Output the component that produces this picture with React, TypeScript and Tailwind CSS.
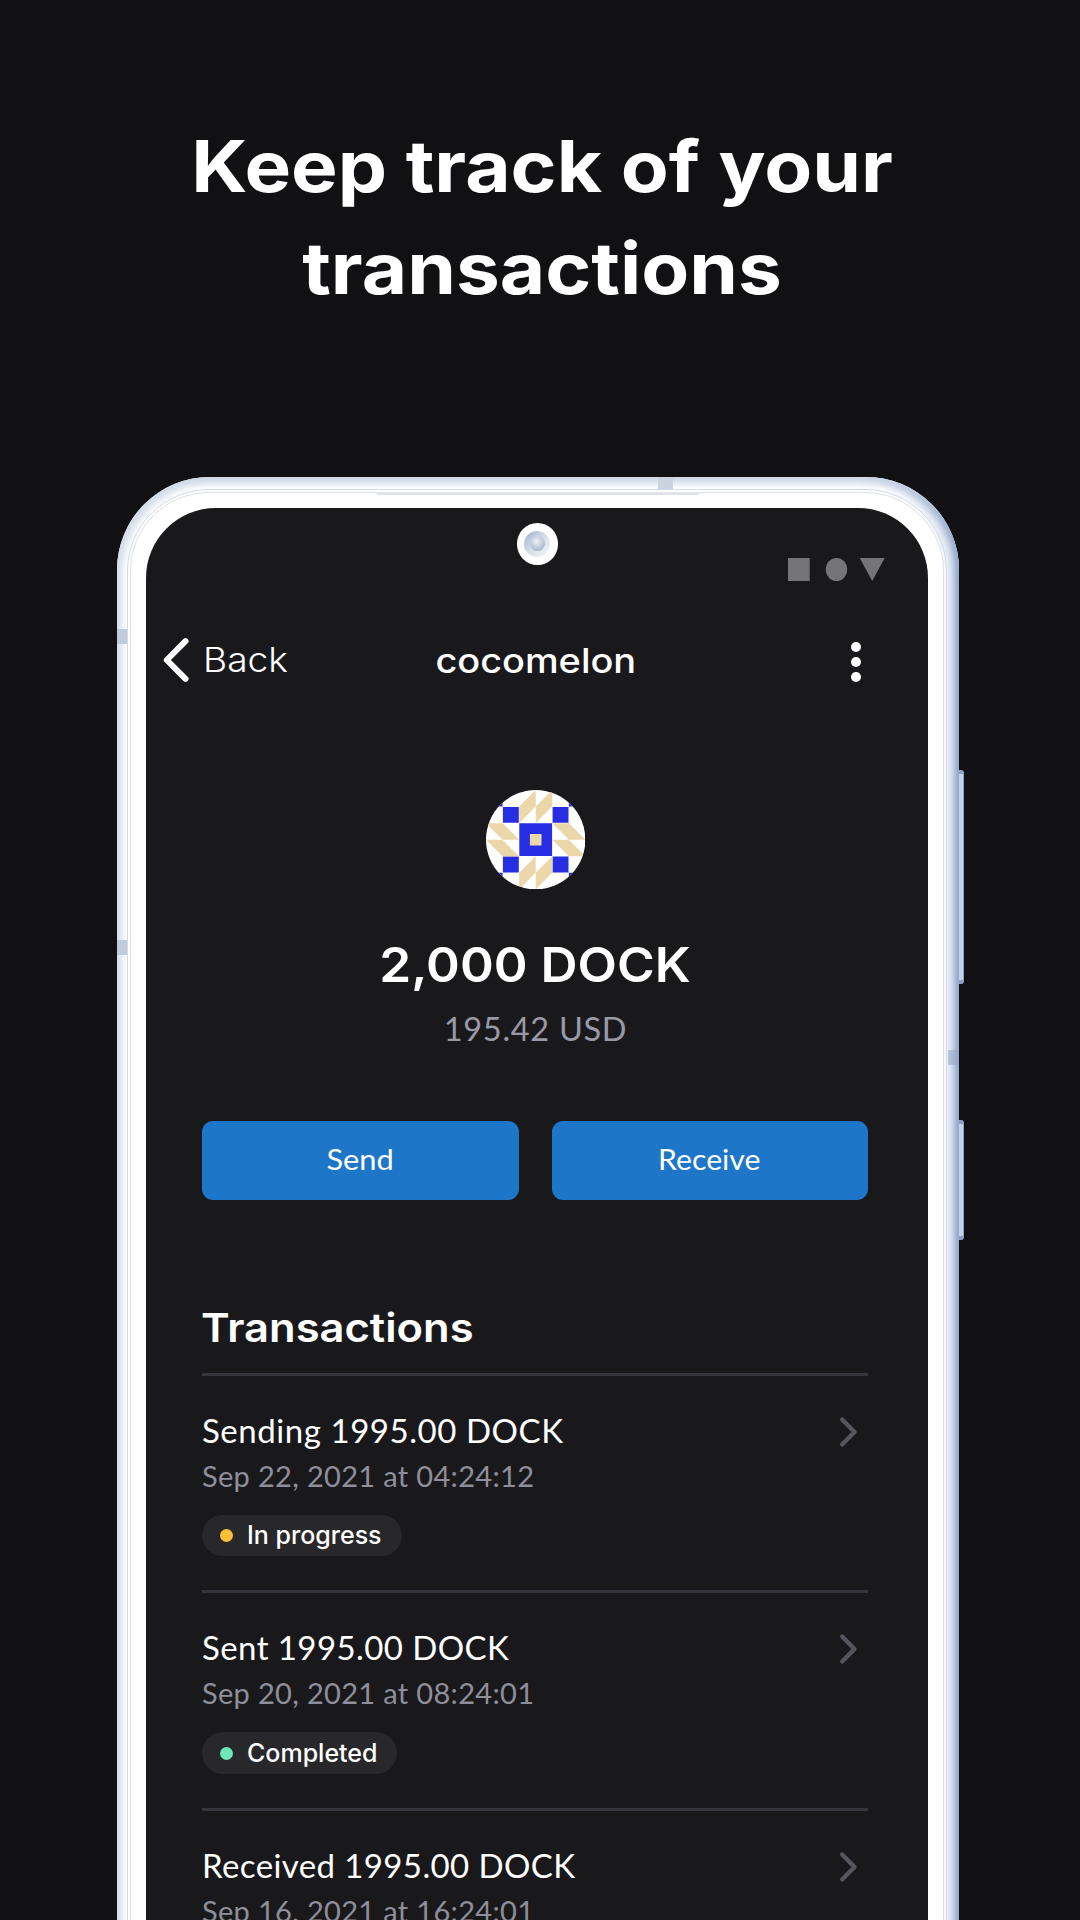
type Transaction = {
  title: string;
  date: string;
  titleClass: string;
  status?: string;
  dotClass?: string;
};

const transactions: Transaction[] = [
  {
    title: "Sending 1995.00 DOCK",
    date: "Sep 22, 2021 at 04:24:12",
    titleClass: "tracking-[0.55px]",
    status: "In progress",
    dotClass: "bg-[#fdbf35]",
  },
  {
    title: "Sent 1995.00 DOCK",
    date: "Sep 20, 2021 at 08:24:01",
    titleClass: "tracking-[0.42px]",
    status: "Completed",
    dotClass: "bg-[#6fe8b8]",
  },
  {
    title: "Received 1995.00 DOCK",
    date: "Sep 16, 2021 at 16:24:01",
    titleClass: "tracking-[0.39px]",
    status: "Completed",
    dotClass: "bg-[#6fe8b8]",
  },
];

function Avatar() {
  return (
    <svg viewBox="0 0 6 6" className="h-[99.4px] w-[99.4px]">
      <defs>
        <clipPath id="avatar-circle">
          <circle cx="3" cy="3" r="3" />
        </clipPath>
      </defs>
      <g clipPath="url(#avatar-circle)">
        <rect width="6" height="6" fill="#fff" />
        <g fill="#272de2">
          <path d="M0 0h1v1H0zM5 0h1v1H5zM0 5h1v1H0zM5 5h1v1H5z" />
          <path d="M1.02 1.02h.96v.96h-.96zM4.02 1.02h.96v.96h-.96zM1.02 4.02h.96v.96h-.96zM4.02 4.02h.96v.96h-.96z" />
          <path d="M2.01 2.01h1.98v1.98H2.01z" />
        </g>
        <g fill="#ecd7ab">
          <path d="M3 0V1L2 2V1zM4 0V1L3 2V1zM3 4V5L2 6V5zM4 4V5L3 6V5z" />
          <path d="M0 2H1L2 3H1zM0 3H1L2 4H1zM4 2H5L6 3H5zM4 3H5L6 4H5z" />
          <path d="M2.65 2.65h.7v.7h-.7z" />
        </g>
      </g>
    </svg>
  );
}

function StatusBar() {
  return (
    <div className="flex justify-end pt-[50px] pr-[43.5px]">
      <svg width="97" height="23" viewBox="0 0 97 23" fill="#757477">
        <rect width="21.7" height="23" />
        <ellipse cx="48.5" cy="11.5" rx="10.7" ry="11.5" />
        <path d="M71.7 0H96.7L84.2 23z" />
      </svg>
    </div>
  );
}

function Header() {
  return (
    <div className="mt-[48px] mb-px grid h-[60px] w-[778.6px] grid-cols-3 items-center text-white">
      <div className="flex items-center pl-[14px]">
        <svg width="32" height="50" viewBox="0 0 32 50" fill="none" stroke="#fff" strokeWidth="6" strokeLinecap="round" strokeLinejoin="round">
          <path d="M25.5 6.2L6.8 25L25.5 43.8" />
        </svg>
        <span className="ml-[10.5px] origin-left scale-x-[1.11] text-[33.5px] leading-[60px] font-light">Back</span>
      </div>
      <span className="scale-x-[1.115] pt-[2px] text-center text-[34px] leading-[60px] font-medium">cocomelon</span>
      <div className="flex flex-col items-end gap-[5px] pt-[4px] pr-[63.5px]">
        <span className="h-[10px] w-[10px] rounded-full bg-white" />
        <span className="h-[10px] w-[10px] rounded-full bg-white" />
        <span className="h-[10px] w-[10px] rounded-full bg-white" />
      </div>
    </div>
  );
}

function TransactionRow({ title, date, titleClass, status, dotClass }: Transaction) {
  return (
    <div className="flex h-[217.7px] shrink-0 flex-col">
      <div className="h-[3px] shrink-0 bg-[#35353d]" />
      <div className="flex justify-between pt-[34px] pr-[10px]">
        <div className="font-['Lato',sans-serif]">
          <div className={`text-[33px] leading-[40px] whitespace-nowrap text-white ${titleClass}`}>{title}</div>
          <div className="mt-[8px] text-[29px] leading-[36px] tracking-[0.33px] whitespace-nowrap text-[#8f8e9b]">{date}</div>
        </div>
        <svg width="20" height="34" viewBox="0 0 20 34" className="mt-[5px]" fill="none" stroke="#55555f" strokeWidth="4.4" strokeLinecap="round" strokeLinejoin="round">
          <path d="M4.2 4.5L16.5 17L4.2 29.5" />
        </svg>
      </div>
      {status && (
        <div className="mt-[21px] flex h-[41.3px] items-center self-start rounded-full bg-[#28282a] pr-[20px] pl-[18px] text-white">
          <span className={`h-[13px] w-[13px] rounded-full ${dotClass}`} />
          <span className="ml-[14px] text-[25px] leading-[41px] font-medium whitespace-nowrap">{status}</span>
        </div>
      )}
    </div>
  );
}

function Phone() {
  return (
    <div className="relative mt-[158px] ml-[117px] h-[1600px] w-[842px] rounded-[93px] bg-white pt-[31px] pr-[31px] pl-[29px] shadow-[inset_5px_5px_7px_#d3dce8,inset_-3px_0_5px_#8ba2c8,inset_-9px_3px_10px_#bccadf]">
      <div className="absolute top-[11.5px] right-[12px] bottom-0 left-[9.5px] rounded-[82px] border border-[#d3dae6]" />
      <div className="absolute top-[14.5px] right-[15.5px] bottom-0 left-[13px] rounded-[79px] border border-[#dbe1eb] bg-white" />
      <div className="absolute top-[14.5px] left-[259px] h-[3px] w-[324px] rounded-b-[6px] bg-[#dfe2ea]" />
      <div className="absolute top-0 left-[541px] h-[12px] w-[15px] bg-[#cad4e1]" />
      <div className="absolute top-[152px] left-0 h-[15px] w-[10px] bg-[#c1ccdb]" />
      <div className="absolute top-[463px] left-0 h-[15px] w-[10px] bg-[#c1ccdb]" />
      <div className="absolute top-[573px] right-0 h-[15px] w-[11px] bg-gradient-to-r from-[#b9c6db] to-[#8fa5c9]" />
      <div className="absolute top-[293px] left-[842px] h-[214px] w-[5px] rounded-r-[3px] border-y-4 border-r border-[#8ba1c6] bg-[#c5d1e4]" />
      <div className="absolute top-[643px] left-[842px] h-[120px] w-[5px] rounded-r-[3px] border-y-4 border-r border-[#8ba1c6] bg-[#c5d1e4]" />

      <div className="relative flex h-full flex-col rounded-t-[70px] bg-[#19191c]">
        <div className="absolute top-[15px] left-[370.5px] flex h-[41.5px] w-[41.5px] items-center justify-center rounded-full bg-white">
          <div className="flex h-[26px] w-[26px] items-center justify-center rounded-full bg-gradient-to-br from-[#9fb1cc] via-[#d5dde9] to-[#fafbfc]">
            <div className="h-[15px] w-[15px] rounded-full bg-[radial-gradient(circle_at_45%_35%,#eef1f6,#b6c3d7_60%,#8498bb)]" />
          </div>
        </div>

        <StatusBar />
        <Header />

        <div className="ml-[56px] flex w-[666px] flex-col">
          <div className="mt-[100px] flex justify-center pl-[1.4px]">
            <Avatar />
          </div>
          <div className="mt-[45.2px] scale-x-[1.068] text-center text-[48px] leading-[60px] font-semibold text-white">2,000 DOCK</div>
          <div className="mt-[14px] pl-[1px] text-center font-['Lato',sans-serif] text-[32.5px] leading-[40px] tracking-[0.7px] text-[#9a99a8]">195.42 USD</div>

          <div className="mt-[72.5px] grid grid-cols-2 gap-[33px] font-['Lato',sans-serif] text-[28.5px] text-white">
            <button className="h-[79px] rounded-[11px] bg-[#1d76c7] pb-[3px]">
              <span className="inline-block scale-x-[1.08]">Send</span>
            </button>
            <button className="h-[79px] rounded-[11px] bg-[#1d76c7] pb-[3px]">
              <span className="inline-block scale-x-[1.06]">Receive</span>
            </button>
          </div>

          <h2 className="mt-[103px] mb-[19.7px] -ml-[1.5px] origin-left scale-x-[1.087] text-[40px] leading-[50px] font-semibold text-white">Transactions</h2>
          {transactions.map((t) => (
            <TransactionRow key={t.date} {...t} />
          ))}
        </div>
      </div>
    </div>
  );
}

export default function App() {
  return (
    <div className="flex h-[1920px] w-[1080px] flex-col overflow-hidden bg-[#111113] font-['Inter',sans-serif]">
      <h1 className="relative left-[1.5px] mt-[115px] scale-x-[1.103] text-center text-[71px] leading-[102px] font-bold text-white">
        Keep track of your
        <br />
        transactions
      </h1>
      <Phone />
    </div>
  );
}
